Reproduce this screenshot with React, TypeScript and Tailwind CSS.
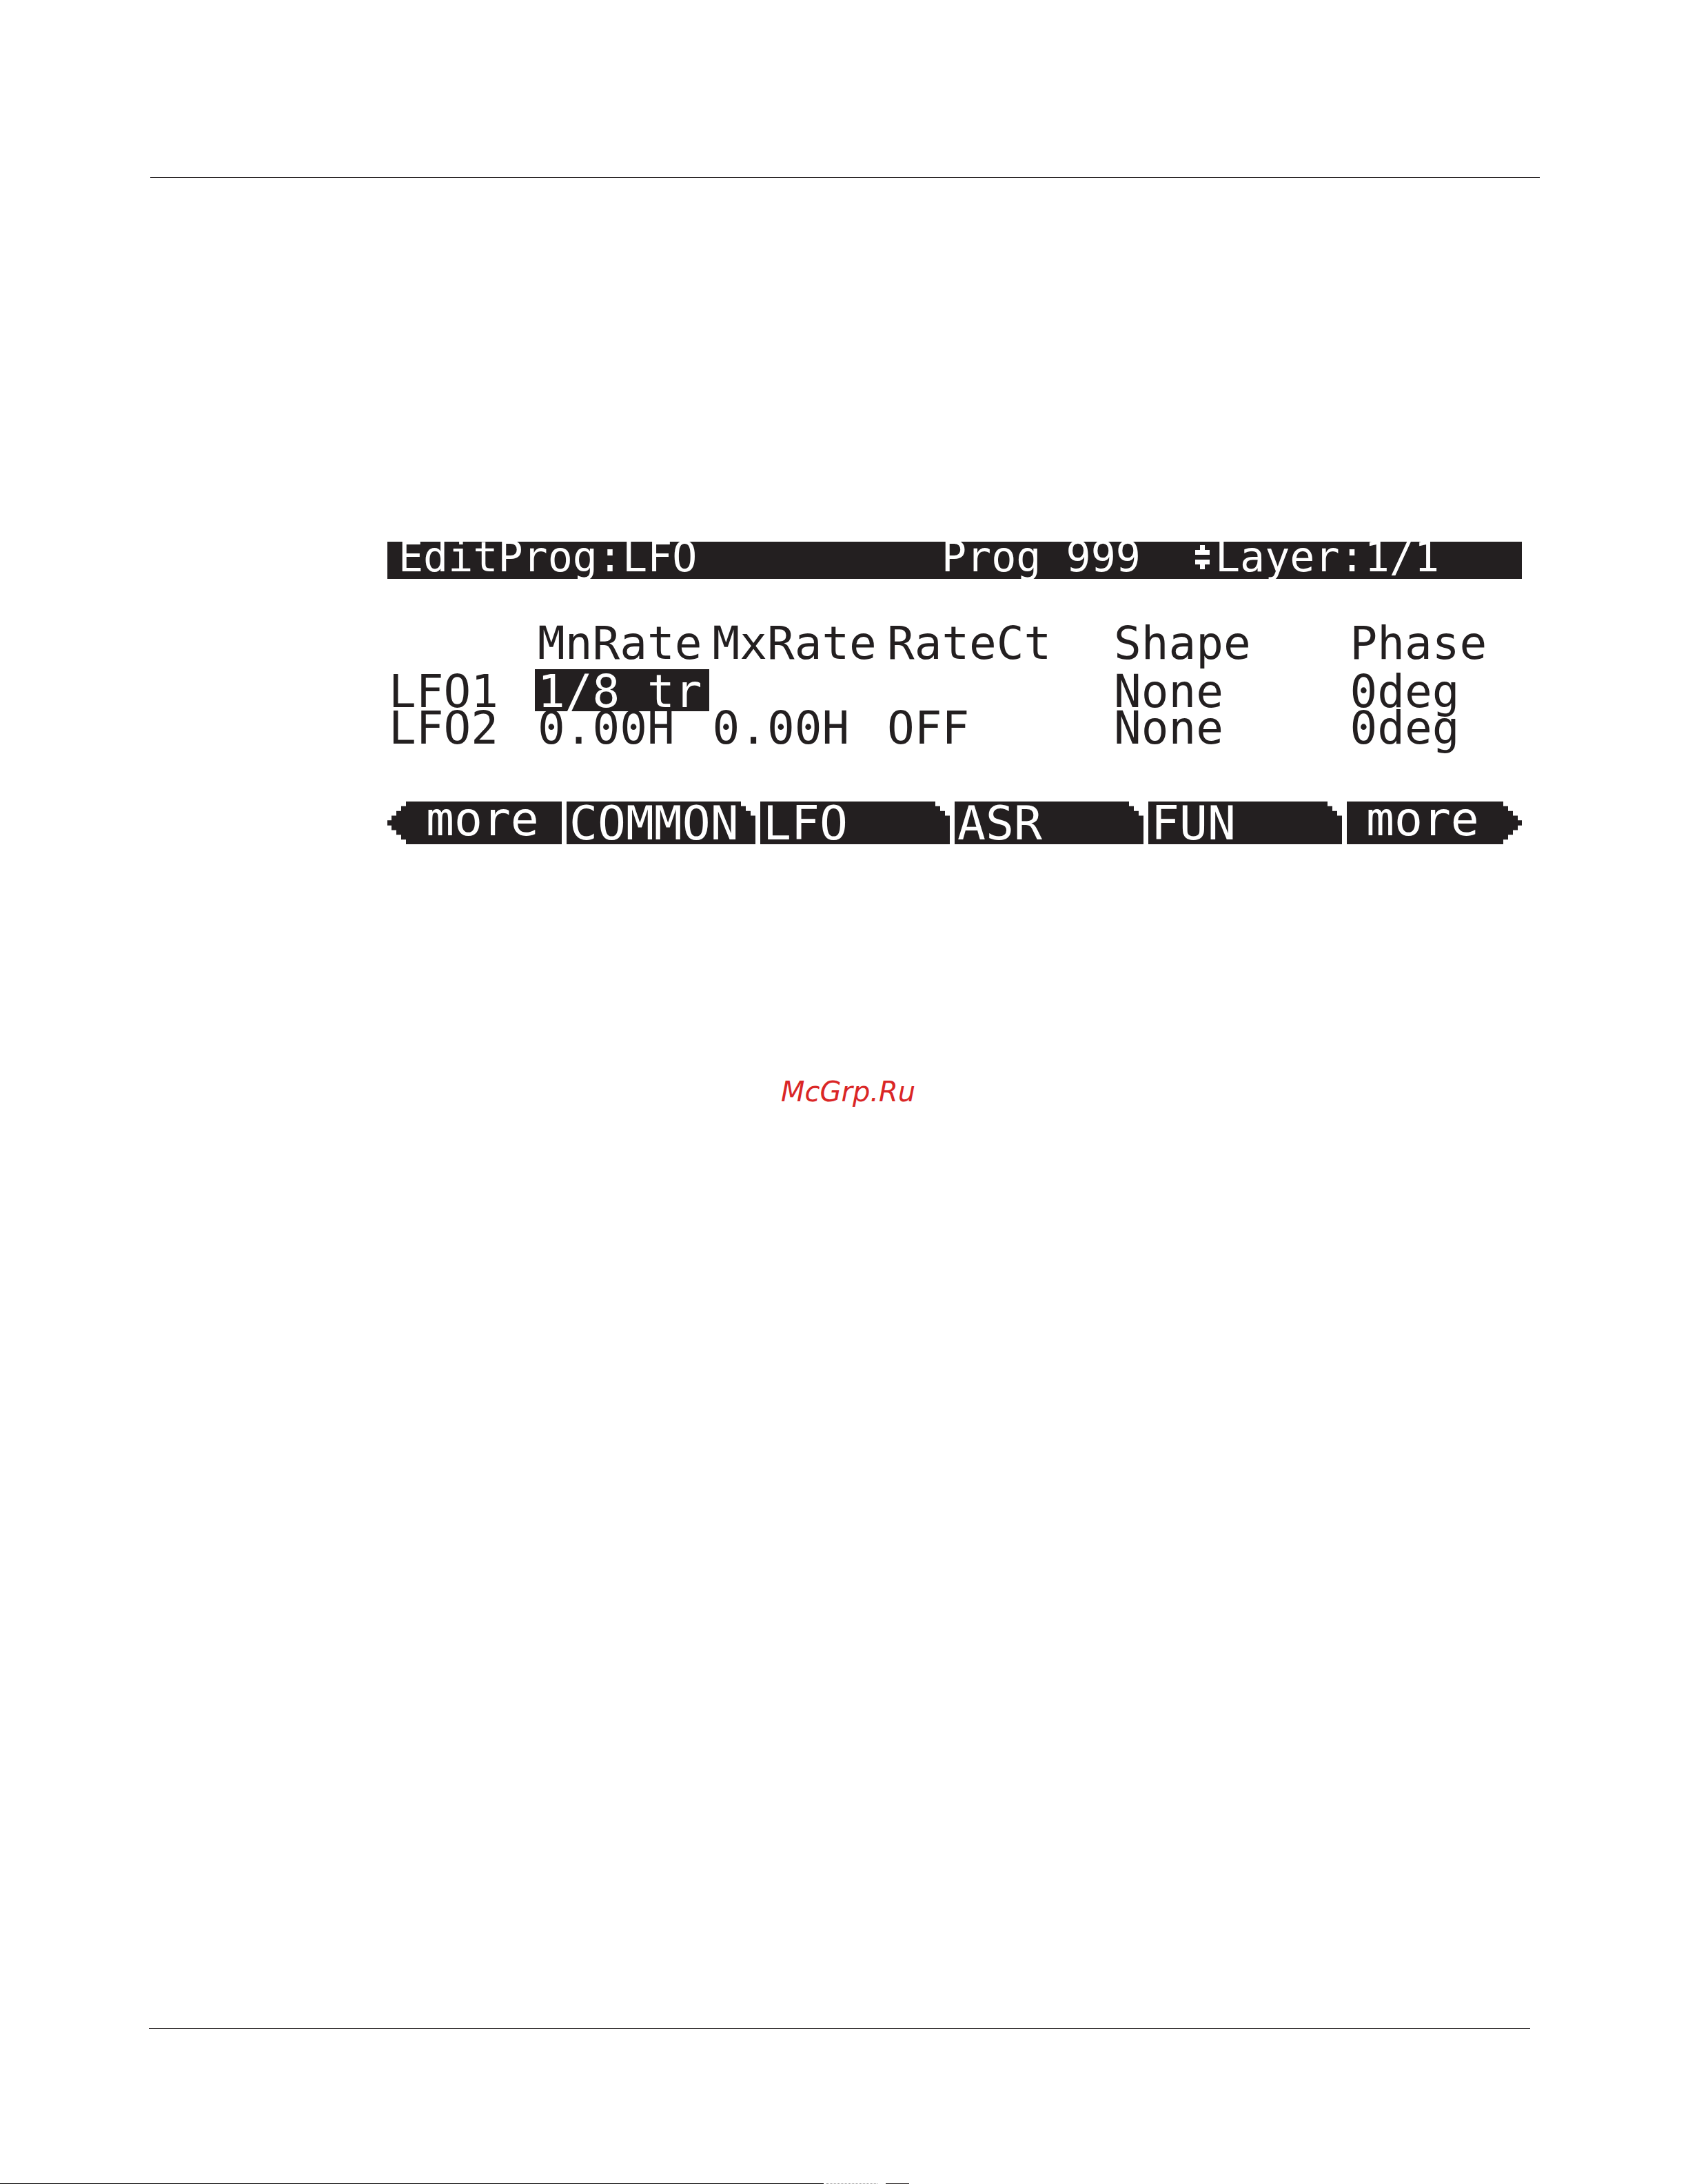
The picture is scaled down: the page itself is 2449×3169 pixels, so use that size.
import React from 'react';

interface LfoRow {
  name: string;
  minRate: string;
  maxRate: string;
  rateCt: string;
  shape: string;
  phase: string;
  active?: boolean;
}

const columns = ['MnRate', 'MxRate', 'RateCt', 'Shape', 'Phase'];

const rows: LfoRow[] = [
  { name: 'LFO1', minRate: '1/8 tr', maxRate: '', rateCt: '', shape: 'None', phase: '0deg', active: true },
  { name: 'LFO2', minRate: '0.00H', maxRate: '0.00H', rateCt: 'OFF', shape: 'None', phase: '0deg' },
];

const pages = ['COMMON', 'LFO', 'ASR', 'FUN'];

// stepped outlines of the soft keys
const tabShape =
  '[clip-path:polygon(0_0,calc(100%-21px)_0,calc(100%-21px)_11%,calc(100%-14px)_11%,calc(100%-14px)_22%,calc(100%-7px)_22%,calc(100%-7px)_33%,100%_33%,100%_100%,0_100%)]';
const leftShape =
  '[clip-path:polygon(27px_0,100%_0,100%_100%,27px_100%,27px_89%,20px_89%,20px_78%,13px_78%,13px_67%,6px_67%,6px_56%,0_56%,0_44%,6px_44%,6px_33%,13px_33%,13px_22%,20px_22%,20px_11%,27px_11%)]';
const rightShape =
  '[clip-path:polygon(0_0,calc(100%-27px)_0,calc(100%-27px)_11%,calc(100%-20px)_11%,calc(100%-20px)_22%,calc(100%-13px)_22%,calc(100%-13px)_33%,calc(100%-6px)_33%,calc(100%-6px)_44%,100%_44%,100%_56%,calc(100%-6px)_56%,calc(100%-6px)_67%,calc(100%-13px)_67%,calc(100%-13px)_78%,calc(100%-20px)_78%,calc(100%-20px)_89%,calc(100%-27px)_89%,calc(100%-27px)_100%,0_100%)]';

const UpDownIcon = () => (
  <svg className="w-[21px] h-[35px] shrink-0" viewBox="0 0 3 5" preserveAspectRatio="none" fill="currentColor" shapeRendering="crispEdges" aria-hidden="true">
    <path d="M1 0h1v1h1v1H0V1h1zM0 3h3v1H2v1H1V4H0z" />
  </svg>
);

const TitleBar = () => (
  <header className="grid grid-cols-[804fr_368fr_474fr] items-start h-[54px] bg-[#231f20] text-white text-[60px] leading-[44px] whitespace-pre">
    <h1 className="pl-4">EditProg:LFO</h1>
    <span>Prog 999</span>
    <div className="flex items-center gap-2">
      <UpDownIcon />
      <span>Layer:1/1</span>
    </div>
  </header>
);

const LfoTable = () => (
  <table className="mt-[66px] w-full table-fixed border-collapse text-left text-[66px] whitespace-pre">
    <colgroup>
      <col className="w-[13%]" />
      <col className="w-[15.4%]" />
      <col className="w-[15.4%]" />
      <col className="w-[20%]" />
      <col className="w-[20.8%]" />
      <col className="w-[15.4%]" />
    </colgroup>
    <thead>
      <tr className="h-[65px] align-top leading-[56px]">
        <td className="p-0" />
        {columns.map((c) => (
          <th key={c} scope="col" className="p-0 pl-1 font-normal">{c}</th>
        ))}
      </tr>
    </thead>
    <tbody>
      {rows.map((r) => (
        <tr key={r.name} className={r.active ? 'leading-[57px]' : 'leading-[50px]'}>
          <th scope="row" className={`p-0 pl-0.5 font-normal ${r.active ? 'pt-1' : ''}`}>{r.name}</th>
          <td className={`p-0 pl-1 ${r.active ? 'pt-1 bg-[#231f20] text-white' : ''}`}>{r.minRate}</td>
          <td className={`p-0 pl-1 ${r.active ? 'pt-1' : ''}`}>{r.maxRate}</td>
          <td className={`p-0 pl-1 ${r.active ? 'pt-1' : ''}`}>{r.rateCt}</td>
          <td className={`p-0 pl-1 ${r.active ? 'pt-1' : ''}`}>{r.shape}</td>
          <td className={`p-0 pl-1 ${r.active ? 'pt-1' : ''}`}>{r.phase}</td>
        </tr>
      ))}
    </tbody>
  </table>
);

const SoftKeys = () => (
  <nav className="mt-[81px] grid grid-cols-[253fr_274fr_275fr_274fr_281fr_254fr] gap-[7px] text-[68px] text-white">
    <button type="button" className={`flex h-[62px] items-start bg-[#231f20] pl-14 leading-[52px] ${leftShape}`}>more</button>
    {pages.map((p) => (
      <button key={p} type="button" className={`flex h-[62px] items-start bg-[#231f20] pl-1 pt-1 leading-[56px] ${tabShape}`}>{p}</button>
    ))}
    <button type="button" className={`flex h-[62px] items-start bg-[#231f20] pl-7 leading-[52px] ${rightShape}`}>more</button>
  </nav>
);

const App: React.FC = () => {
  return (
    <div className="flex min-h-screen flex-col bg-white text-[#231f20]">
      <hr className="mt-[257px] ml-[218px] mr-[215px] border-0 h-px bg-[#231f20]" />

      {/* LCD screen */}
      <main className="mt-[528px] ml-[562px] mr-[241px] font-['DejaVu_Sans_Mono',monospace]">
        <TitleBar />
        <LfoTable />
        <SoftKeys />
      </main>

      <p className="mt-[335px] ml-[1133px] font-['DejaVu_Sans',sans-serif] text-[40px] leading-[48px] italic text-[#da2626]">McGrp.Ru</p>

      <hr className="mt-auto mb-[224px] ml-[216px] mr-[229px] border-0 h-px bg-[#231f20]" />

      {/* Bottom page edge */}
      <div className="flex h-px">
        <span className="w-[1195px] bg-black" />
        <span className="ml-1 w-[74px] border-t border-dotted border-black/40" />
        <span className="ml-3 w-[34px] bg-[#231f20]" />
      </div>
    </div>
  );
};

export default App;
